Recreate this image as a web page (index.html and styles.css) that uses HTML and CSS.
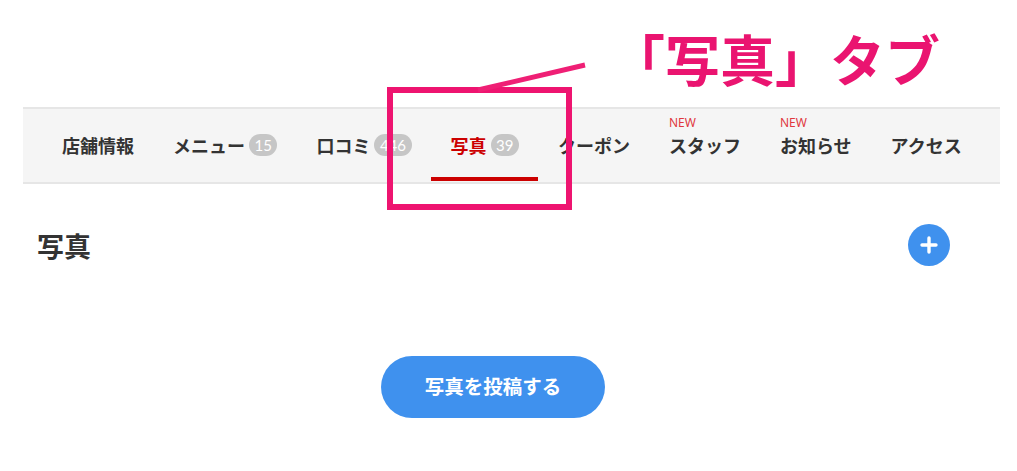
FILE: index.html
```html
<!DOCTYPE html>
<html lang="ja">
<head>
<meta charset="utf-8">
<link rel="stylesheet" href="styles.css">
</head>
<body>
<div class="page">
  <nav class="tabs">
    <a class="tab">店舗情報</a>
    <a class="tab">メニュー<span class="badge">15</span></a>
    <a class="tab">口コミ<span class="badge">446</span></a>
    <a class="tab active">写真<span class="badge">39</span></a>
    <a class="tab">クーポン</a>
    <a class="tab"><span class="new">NEW</span>スタッフ</a>
    <a class="tab"><span class="new">NEW</span>お知らせ</a>
    <a class="tab">アクセス</a>
  </nav>
  <div class="head-row">
    <h2 class="title">写真</h2>
    <button class="plus" aria-label="追加">
      <svg width="18" height="18" viewBox="0 0 18 18"><path d="M9 2v14M2 9h14" stroke="#fff" stroke-width="3.4" stroke-linecap="round"/></svg>
    </button>
  </div>
  <div class="post-row">
    <button class="post">写真を投稿する</button>
  </div>
</div>
<div class="callout-box"></div>
<svg class="callout-line" width="1017" height="471" viewBox="0 0 1017 471"><line x1="478" y1="90" x2="585" y2="65" stroke="#ef1f75" stroke-width="5"/></svg>
<div class="callout-text">「写真」タブ</div>
</body>
</html>
```

FILE: styles.css
```css
* { box-sizing: border-box; }
html, body { margin: 0; padding: 0; background: #fff; }
body {
  font-family: "Noto Sans CJK JP", "Noto Sans", sans-serif;
  color: #333;
  width: 1017px;
  height: 471px;
  overflow: hidden;
  position: relative;
}
.page {
  margin-left: 23px;
  width: 977px;
  padding-top: 107px;
}
.tabs {
  display: flex;
  align-items: stretch;
  height: 77px;
  background: #f5f5f5;
  border-top: 2px solid #e6e6e6;
  border-bottom: 2px solid #e6e6e6;
  padding-left: 19.5px;
}
.tab {
  position: relative;
  display: flex;
  align-items: center;
  padding: 0 19.5px 2px;
  font-size: 18px;
  font-weight: 700;
  color: #333;
  white-space: nowrap;
  letter-spacing: 0;
}
.tab.active { color: #cc0000; }
.tab.active::after {
  content: "";
  position: absolute;
  left: 0;
  right: 0;
  bottom: 1px;
  height: 4px;
  background: #cc0000;
}
.badge {
  display: inline-flex;
  align-items: center;
  justify-content: center;
  min-width: 26px;
  height: 22px;
  padding: 0 5.5px;
  margin-left: 4px;
  border-radius: 11px;
  background: #c6c6c6;
  color: #fff;
  font-family: Lato, "Noto Sans", sans-serif;
  font-size: 15px;
  font-weight: 400;
}
.new {
  position: absolute;
  left: 19.5px;
  top: 8px;
  font-family: "Noto Sans", sans-serif;
  font-size: 12px;
  font-weight: 400;
  color: #e0383e;
  line-height: 1;
}
.head-row {
  display: flex;
  justify-content: space-between;
  align-items: center;
  margin-top: 40px;
  height: 42px;
  padding: 0 50px 0 14px;
}
.title {
  margin: 0;
  font-size: 27px;
  font-weight: 700;
  color: #333;
  line-height: 1;
}
.plus {
  width: 42px;
  height: 42px;
  border: none;
  border-radius: 50%;
  background: #3f91ee;
  display: flex;
  align-items: center;
  justify-content: center;
  padding: 0;
}
.post-row {
  margin-top: 90px;
  padding-left: 358px;
}
.post {
  width: 224px;
  height: 62px;
  border: none;
  border-radius: 31px;
  background: #3f91ee;
  color: #fff;
  font-family: "Noto Sans CJK JP", sans-serif;
  font-size: 19.5px;
  font-weight: 700;
  padding: 0 0 4px;
}
.callout-box {
  position: absolute;
  left: 387px;
  top: 87px;
  width: 185px;
  height: 123px;
  border: 6px solid #ee1470;
}
.callout-line {
  position: absolute;
  left: 0;
  top: 0;
}
.callout-text {
  position: absolute;
  left: 610px;
  top: 24px;
  font-size: 55px;
  font-weight: 700;
  color: #ea1470;
  line-height: 1.2;
  white-space: nowrap;
}
```
